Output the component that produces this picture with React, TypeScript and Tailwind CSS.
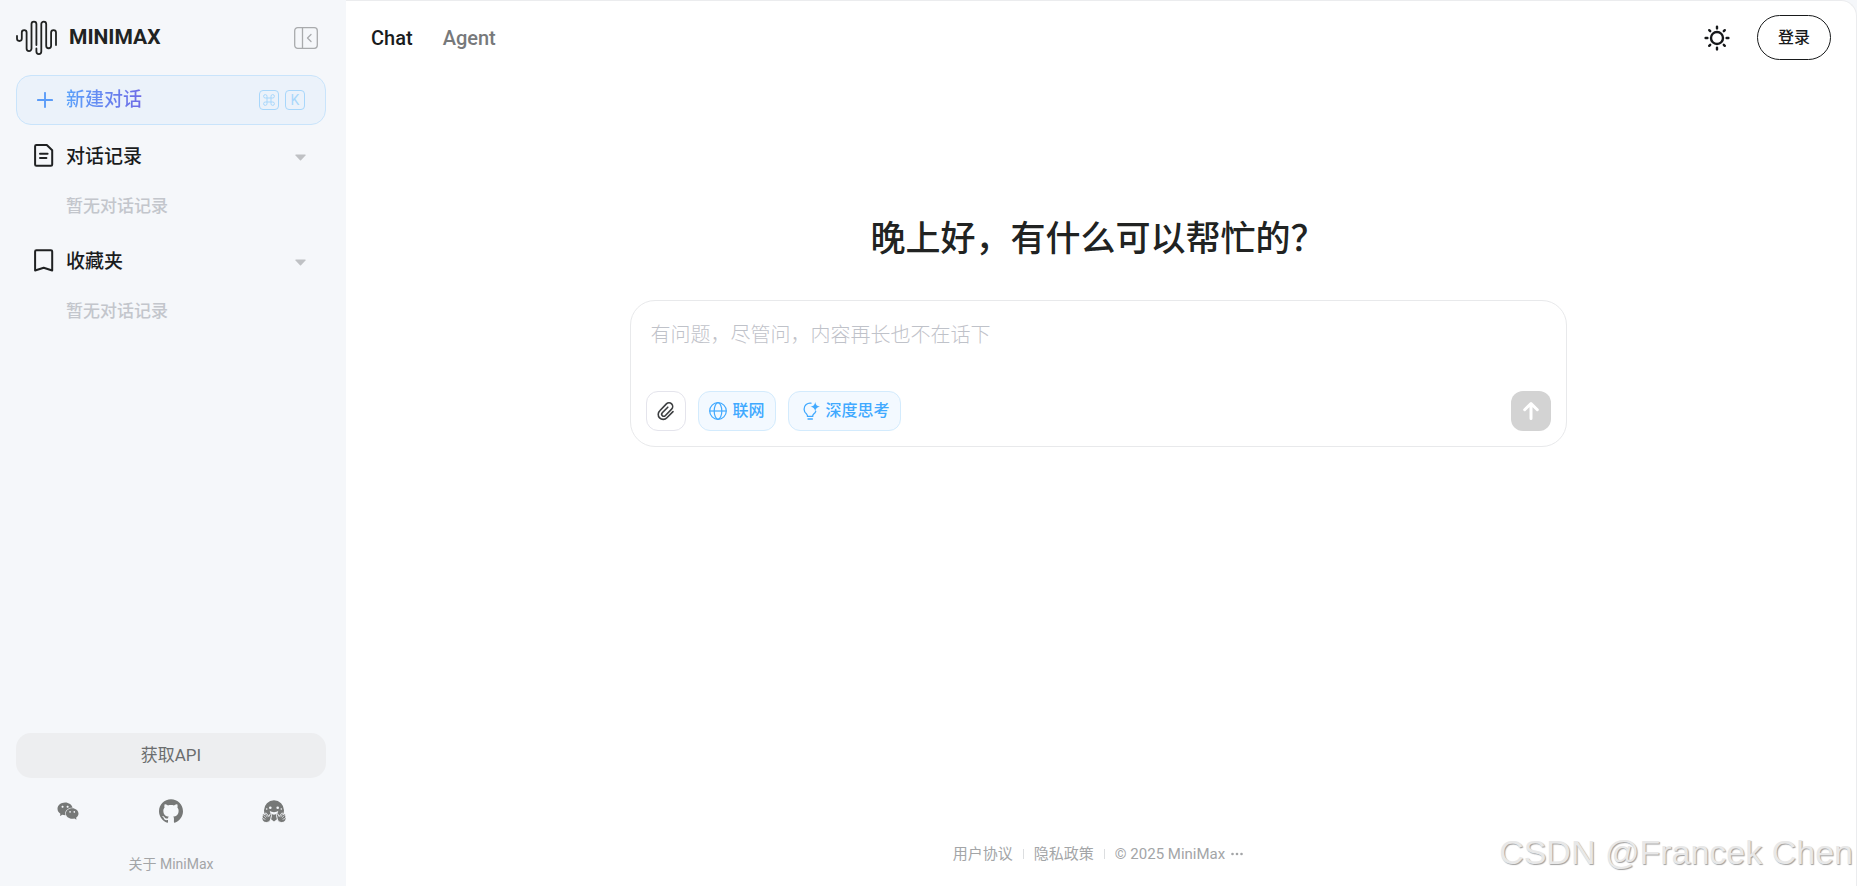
import { useState } from "react";
import { AiFillWechat } from "react-icons/ai";
import { SiGithub } from "react-icons/si";

const SECTIONS = [
  { id: "history", name: "对话记录", empty: "暂无对话记录" },
  { id: "favorites", name: "收藏夹", empty: "暂无对话记录" },
];

const SOCIALS = [
  { name: "WeChat", Icon: AiFillWechat },
  { name: "GitHub", Icon: SiGithub },
  { name: "Hugging Face", Icon: HuggingIcon },
];

function HuggingIcon({ size }: { size: number }) {
  return (
    <svg width={size} height={size} viewBox="0 0 24 24" fill="currentColor">
      <path d="M12 1.200A10 10 0 0 0 2 11.200c0 1.500.3 2.900.9 4.200L12 22.500l9.100-7.100c.6-1.300.9-2.700.9-4.200A10 10 0 0 0 12 1.200z" />
      <g fill="#f5f7fa">
        <circle cx="8.300" cy="8.800" r="1.300" />
        <circle cx="15.700" cy="8.800" r="1.300" />
        <circle cx="4.700" cy="10" r=".8" />
        <circle cx="19.300" cy="10" r=".8" />
        <path d="M7.800 11.800c1.200 1 2.600 1.400 4.200 1.400s3-.4 4.200-1.400c.2 2.300-1.700 3.900-4.200 3.900s-4.400-1.600-4.200-3.900z" />
      </g>
      <g stroke="#f5f7fa" strokeWidth="1">
        <path d="M.6 15.300c.7-.8 1.500-.3 1.900.3l.6-1.100c.6-.8 1.700-.3 1.800.6l1.900 2.400 1-2.100c.7-1 2-.3 1.700.9l-.6 2.900c-.2 2.700-2 4.300-4.600 4.300-2.200 0-3.500-1-4.100-2.900-.5-.9-.4-1.500.2-1.900-.4-1-.3-1.900.2-3.400z" />
        <path d="M23.400 15.300c-.7-.8-1.500-.3-1.900.3l-.6-1.100c-.6-.8-1.700-.3-1.800.6l-1.900 2.400-1-2.100c-.7-1-2-.3-1.700.9l.6 2.900c.2 2.700 2 4.300 4.600 4.300 2.200 0 3.500-1 4.100-2.900.5-.9.4-1.500-.2-1.900.4-1 .3-1.900-.2-3.400z" />
        <path d="M1.400 16.300l2.800 2.700M3.400 15.300l2 2.900M.8 19.400l2.600 1M22.600 16.300l-2.800 2.700M20.600 15.300l-2 2.900M23.200 19.400l-2.600 1" strokeWidth=".7" />
      </g>
    </svg>
  );
}

function LogoMark() {
  return (
    <svg width="42" height="36" viewBox="0 0 42 36" fill="none" stroke="#212322" strokeWidth="1.8" strokeLinecap="round">
      <path d="M1 16v2.6a2.4 2.4 0 0 0 4.8 0V12.6a2.4 2.4 0 0 1 4.8 0V28.6a2.4 2.4 0 0 0 4.9 0V4a2.4 2.4 0 0 1 4.9 0V25" />
      <path d="M20.4 28.4v3.2a2.4 2.4 0 0 0 4.9 0V4a2.4 2.4 0 0 1 4.9 0V25.8a2.4 2.4 0 0 0 4.9 0V12.6a2.4 2.4 0 0 1 4.9 0V25" />
    </svg>
  );
}

function CollapseIcon() {
  return (
    <svg width="24" height="22" viewBox="0 0 24 22" fill="none" stroke="#a9abad" strokeWidth="1.3" strokeLinecap="round" strokeLinejoin="round">
      <rect x="0.7" y="0.7" width="22.6" height="20.6" rx="3" />
      <path d="M8.5 1v20M17 7.5 13.5 11l3.5 3.5" />
    </svg>
  );
}

function SectionIcon({ id }: { id: string }) {
  return (
    <svg width="20" height="26" viewBox="0 0 20 26" fill="none" stroke="#1f2122" strokeWidth="2" strokeLinecap="round" strokeLinejoin="round">
      {id === "history" ? (
        <>
          <path d="M2.500 1h10.300L18.200 6.200V20.500a1.300 1.300 0 0 1-1.300 1.300H2.400a1.300 1.300 0 0 1-1.300-1.300V2.300A1.300 1.300 0 0 1 2.400 1z" />
          <path d="M6 9.800h7.600M6 14h6.400" />
        </>
      ) : (
        <path d="M2.400 1.200h14.500a1.300 1.300 0 0 1 1.300 1.300v19L9.700 18.700 1.100 21.500v-19a1.300 1.300 0 0 1 1.300-1.300z" />
      )}
    </svg>
  );
}

function CommandKey() {
  return (
    <svg width="12" height="12" viewBox="0 0 12 12" fill="none" stroke="currentColor" strokeWidth="1">
      <path d="M4 4V2.4A1.7 1.7 0 1 0 2.4 4h7.2A1.7 1.7 0 1 0 8 2.4v7.2A1.7 1.7 0 1 0 9.6 8H2.4A1.7 1.7 0 1 0 4 9.6z" />
    </svg>
  );
}

function SunIcon() {
  return (
    <svg width="26" height="26" viewBox="0 0 26 26" fill="none" stroke="#16181a" strokeWidth="2.4" strokeLinecap="round">
      <circle cx="13" cy="13" r="6" />
      <path d="M13 1.600v1.800M13 22.600v1.800M1.600 13h1.800M22.600 13h1.800M5.200 5.200l1 1M19.800 19.800l1 1M5.200 20.800l1-1M19.800 6.200l1-1" />
    </svg>
  );
}

function ClipIcon() {
  return (
    <svg width="18" height="20" viewBox="0 0 18 20" fill="none" stroke="#3c3e40" strokeWidth="1.6" strokeLinecap="round" strokeLinejoin="round">
      <path d="M16 10.6 9.900 16.700a5 5 0 0 1-7.300.2 5 5 0 0 1 .2-7.100l6.600-6.900a3.600 3.600 0 0 1 5.200 0 3.700 3.700 0 0 1 0 5.200l-6.400 6.600a2 2 0 0 1-2.900 0 2.100 2.100 0 0 1 0-2.900l5.500-5.600" />
    </svg>
  );
}

function GlobeIcon() {
  return (
    <svg width="18" height="18" viewBox="0 0 18 18" fill="none" stroke="currentColor" strokeWidth="1.2">
      <circle cx="9" cy="9" r="8.3" />
      <ellipse cx="9" cy="9" rx="3.8" ry="8.3" />
      <path d="M.7 9h16.6" />
    </svg>
  );
}

function BulbIcon() {
  return (
    <svg width="17" height="18" viewBox="0 0 17 18" fill="none" stroke="currentColor" strokeWidth="1.3" strokeLinecap="round">
      <path d="M8 1.2a6 6 0 0 0-6.9 6c0 2.4 1.2 3.8 2.5 4.9.6.6.9 1.3.9 2.2h5.2c0-.9.4-1.7 1-2.3.9-.8 1.6-1.6 2-2.6" />
      <path d="M5 17h4.400" />
      <path d="M12.200.1c.5 2.900 1.500 4.100 4.700 4.700-3.200.6-4.200 1.800-4.700 4.700-.5-2.900-1.500-4.100-4.700-4.700 3.200-.6 4.200-1.800 4.700-4.700z" fill="currentColor" stroke="none" />
    </svg>
  );
}

function Sidebar() {
  const [closed, setClosed] = useState<string[]>([]);

  const toggle = (id: string) => {
    setClosed((prev) => (prev.includes(id) ? prev.filter((x) => x !== id) : [...prev, id]));
  };

  return (
    <aside className="flex w-[346px] shrink-0 flex-col bg-[#f5f7fa] pt-5 pr-5 pb-[10px] pl-4">
      <div className="flex h-9 items-center justify-between pr-2">
        <a href="#" className="flex items-center gap-[11px] text-[21px] font-bold text-[#212322]">
          <LogoMark />
          MINIMAX
        </a>
        <button type="button" aria-label="收起侧栏">
          <CollapseIcon />
        </button>
      </div>

      <button
        type="button"
        className="mt-[19px] flex h-[50px] items-center rounded-[15px] border border-[#c9e4fb] bg-[#ebf2fa] px-5"
      >
        <svg width="16" height="16" viewBox="0 0 16 16" stroke="#5b9cf8" strokeWidth="1.9" strokeLinecap="round">
          <path d="M8 .9v14.200M.9 8h14.200" />
        </svg>
        <span className="ml-[13px] bg-gradient-to-r from-[#5aa2fb] to-[#6d6be6] bg-clip-text text-[19px] font-medium text-transparent">
          新建对话
        </span>
        <span className="ml-auto flex gap-[6px] text-[#a8d7fb]">
          <kbd className="flex size-5 items-center justify-center rounded-[4px] border border-current">
            <CommandKey />
          </kbd>
          <kbd className="flex size-5 items-center justify-center rounded-[4px] border border-current font-[Roboto] text-sm">K</kbd>
        </span>
      </button>

      <nav className="mt-[7px]">
        {SECTIONS.map((s) => (
          <section key={s.id}>
            <button type="button" onClick={() => toggle(s.id)} className="flex h-[50px] w-full items-center pr-5 pl-[18px]">
              <SectionIcon id={s.id} />
              <span className="ml-3 text-[19px] font-medium text-[#1a1c1d]">{s.name}</span>
              <svg className="ml-auto" width="11" height="7" viewBox="0 0 11 7" fill="#bfc1c4">
                <path d="M1 .5h9a.7.7 0 0 1 .5 1.100L6 6.200a.7.7 0 0 1-1 0L.5 1.600A.7.7 0 0 1 1 .5z" />
              </svg>
            </button>
            {!closed.includes(s.id) && (
              <p className="h-[55px] pt-3 pl-[50px] text-[17px] leading-6 font-medium text-[#c3c6cc]">{s.empty}</p>
            )}
          </section>
        ))}
      </nav>

      <div className="mt-auto">
        <button type="button" className="h-[45px] w-full rounded-[15px] bg-[#edeef0] text-[17px] text-[#6b6d6e]">
          获取API
        </button>
        <div className="mt-[21px] flex justify-between px-10 text-[#767877]">
          {SOCIALS.map(({ name, Icon }) => (
            <a key={name} href="#" aria-label={name}>
              <Icon size={24} />
            </a>
          ))}
        </div>
        <a href="#" className="mt-[29px] block text-center text-sm leading-6 text-[#a3a5a7]">
          关于 MiniMax
        </a>
      </div>
    </aside>
  );
}

function Composer() {
  const [text, setText] = useState("");

  return (
    <form
      onSubmit={(e) => e.preventDefault()}
      className="flex w-full max-w-[937px] flex-col rounded-[25px] border border-[#e8e9eb] bg-white p-[15px]"
    >
      <textarea
        aria-label="输入问题"
        value={text}
        onChange={(e) => setText(e.target.value)}
        placeholder="有问题，尽管问，内容再长也不在话下"
        className="h-[75px] resize-none px-[5px] pt-1 text-xl leading-[30px] font-light outline-none placeholder:text-[#bfc2c9]"
      />
      <div className="flex items-center gap-3 text-base font-medium">
        <button type="button" aria-label="添加附件" className="flex size-10 items-center justify-center rounded-xl border border-[#e4e4ec]">
          <ClipIcon />
        </button>
        <button type="button" className="flex h-10 items-center gap-[6px] rounded-xl border border-[#d3ebfd] bg-[#f3f9ff] px-[10px] text-[#40a9ff]">
          <GlobeIcon />
          联网
        </button>
        <button type="button" className="flex h-10 items-center gap-[6px] rounded-xl border border-[#d3ebfd] bg-[#f3f9ff] pr-[10px] pl-[14px] text-[#40a9ff]">
          <BulbIcon />
          深度思考
        </button>
        <button type="submit" aria-label="发送" className="ml-auto flex size-10 items-center justify-center rounded-xl bg-[#d3d3d3]">
          <svg width="18" height="20" viewBox="0 0 18 20" fill="none" stroke="#fff" strokeWidth="3" strokeLinecap="round" strokeLinejoin="round">
            <path d="M9 17.500V2.700M2.700 8.700 9 2.500l6.300 6.200" />
          </svg>
        </button>
      </div>
    </form>
  );
}

export default function App() {
  return (
    <div className="relative flex min-h-screen overflow-hidden bg-[#f5f7fa] font-[Roboto,'Noto_Sans_CJK_SC',sans-serif]">
      <Sidebar />

      <main className="flex flex-1 flex-col rounded-tr-2xl border-t border-r border-[#ebecee] bg-white">
        <header className="flex items-center justify-between pt-[14px] pr-[25px] pl-[25px]">
          <nav className="flex gap-[30px] text-xl font-medium">
            <a href="#" className="text-[#1a1c1d]">Chat</a>
            <a href="#" className="text-[#77797b]">Agent</a>
          </nav>
          <div className="flex items-center gap-[27px]">
            <button type="button" aria-label="切换主题">
              <SunIcon />
            </button>
            <button type="button" className="h-[45px] w-[74px] rounded-full border border-[#181a1b] text-base font-medium text-[#181a1b]">
              登录
            </button>
          </div>
        </header>

        <div className="flex flex-col items-center pt-[155px] pr-[30px] pl-6">
          <h1 className="text-[35px] leading-[50px] font-medium text-[#212322]">晚上好，有什么可以帮忙的？</h1>
          <div className="mt-[35px] flex w-full justify-center">
            <Composer />
          </div>
        </div>

        <footer className="mt-auto flex items-center justify-center pr-[6px] pb-5 text-[15px] leading-6 text-[#a3a5a7]">
          <a href="#">用户协议</a>
          <span className="mx-[10px] h-[10px] w-px bg-[#dcdee0]" />
          <a href="#">隐私政策</a>
          <span className="mx-[10px] h-[10px] w-px bg-[#dcdee0]" />
          <span>© 2025 MiniMax</span>
          <button type="button" aria-label="更多" className="ml-[6px]">
            <svg width="12" height="4" viewBox="0 0 12 4" fill="#a3a5a7">
              <circle cx="1.500" cy="2" r="1.300" />
              <circle cx="6" cy="2" r="1.300" />
              <circle cx="10.500" cy="2" r="1.300" />
            </svg>
          </button>
        </footer>
      </main>

      <div className="pointer-events-none absolute right-1 bottom-[14px] font-['Liberation_Sans',sans-serif] text-[34px] leading-10 text-[#e8e8e8] [text-shadow:1px_1px_1px_#a0a0a0]">
        CSDN @Francek Chen
      </div>
    </div>
  );
}
